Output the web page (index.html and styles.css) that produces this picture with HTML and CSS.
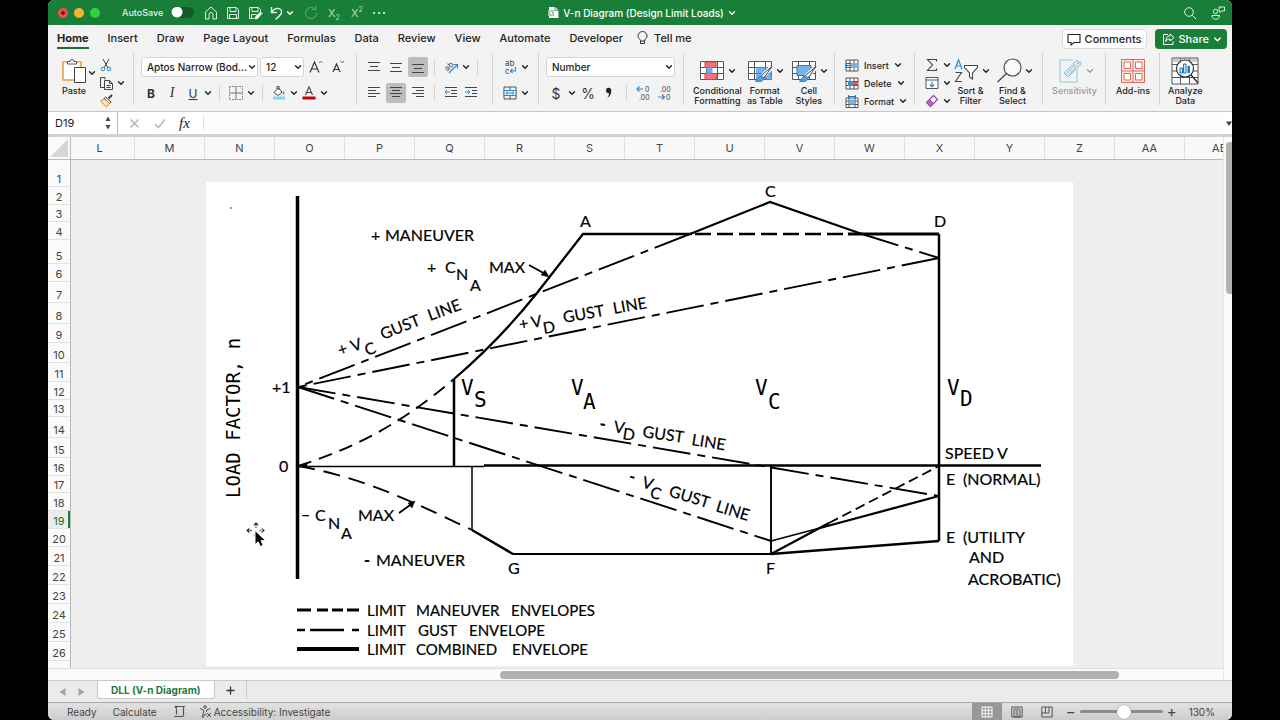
FILE: index.html
```html
<!DOCTYPE html>
<html lang="en">
<head>
<meta charset="utf-8">
<title>V-n Diagram (Design Limit Loads)</title>
<link rel="stylesheet" href="styles.css">
</head>
<body>
<svg class="defs" width="0" height="0" aria-hidden="true">
  <symbol id="chev" viewBox="0 0 8 8"><path d="M1.5 2.7 4 5.2 6.5 2.7" fill="none" stroke="currentColor" stroke-width="1.3" stroke-linecap="round" stroke-linejoin="round"/></symbol>
  <symbol id="table" viewBox="0 0 26 24"><path d="M1.500 2.500h23v18h-23zM1.500 8.500h23M1.500 14.500h23M7.500 2.500v18M18.500 2.500v18" fill="#fff" stroke="#555"/></symbol>
  <symbol id="brush" viewBox="0 0 26 24"><path d="M25 8 15 18" stroke="#f3f3f3" stroke-width="5"/><path d="M25 7.500 14.500 16.500l2.500 2.500z" fill="#fff" stroke="#444"/><path d="M14.500 16.500c-3 0-3 3.500-6 5.500 4 1.500 8.500 0 8.500-3z" fill="#5b9bd5" stroke="#2b7cc0"/></symbol>
</svg>
<div class="window">
  <header class="titlebar">
    <div class="title-left">
      <div class="lights"><i class="light red"></i><i class="light amber"></i><i class="light lime"></i></div>
      <label class="autosave">AutoSave <input type="checkbox" role="switch"></label>
      <div class="quick">
        <button aria-label="Home"><svg width="16" height="16" viewBox="0 0 16 16"><path d="M2.500 7 8 2l5.500 5v7H10V9.500a2 2 0 0 0-4 0V14H2.500z"/></svg></button>
        <button aria-label="Save"><svg width="16" height="16" viewBox="0 0 16 16"><path d="M2.500 2.500h9l2 2v9h-11zM5 2.500v4h6v-4M4.500 13.500v-4h7v4"/></svg></button>
        <button aria-label="Save as"><svg width="16" height="16" viewBox="0 0 16 16"><path d="M7 13.500H2.500v-11h9l2 2V7M5 2.500v4h6v-4M4.500 13v-3.500h5"/><path d="M8 14l.7-2.500L13.500 7l1.500 1.500-4.500 5z" fill="#fff"/></svg></button>
        <span class="split"><button aria-label="Undo"><svg width="16" height="16" viewBox="0 0 16 16"><path d="M2.500 2v5.500H8M2.800 7C6 2 13.500 2.500 12.500 7.500 12 10 9 12 6.500 14.500" stroke-width="1.400"/></svg></button><button class="chev" aria-label="Undo list"><svg width="8" height="8"><use href="#chev"/></svg></button></span>
        <button class="dim" aria-label="Redo"><svg width="16" height="16" viewBox="0 0 16 16"><path d="M13.500 8A5.500 5.500 0 1 1 11 3.400M9 4.500h4V1"/></svg></button>
        <button class="script" aria-label="Subscript"><span>X<sub>2</sub></span></button>
        <button class="script" aria-label="Superscript"><span>X<sup>2</sup></span></button>
        <button aria-label="More"><svg width="16" height="16" viewBox="0 0 16 16"><path d="M3 8h.1M8 8h.1M13 8h.1" stroke-width="2.200" stroke-linecap="round"/></svg></button>
      </div>
    </div>
    <h1 class="doc-title"><svg width="11" height="13" viewBox="0 0 11 13"><path d="M1 1h6l3.500 3.500V12H1z" fill="#fff"/><path d="M7 1v3.500h3.500" fill="none" stroke="#1a7f38" stroke-width=".7"/><path d="M0 4h6v6H0z" fill="#9cc9a9"/><path d="M1.700 5.300 4.300 8.700M4.300 5.300 1.700 8.700" stroke="#fff"/></svg><span>V-n Diagram (Design Limit Loads)</span><svg width="8" height="8"><use href="#chev"/></svg></h1>
    <div class="title-right">
      <button aria-label="Search"><svg width="16" height="16" viewBox="0 0 16 16"><circle cx="7" cy="7" r="4.300"/><path d="m10.200 10.200 4 4"/></svg></button>
      <button aria-label="Collaborate"><svg width="16" height="16" viewBox="0 0 16 16"><circle cx="5.500" cy="6.500" r="2.200"/><path d="M2 10.500h7.500c0 5-7.500 5-7.500 0zM9 2h5.500v4h-3l-1.500 1.500V6H9z"/></svg></button>
    </div>
  </header>

  <nav class="tabs">
    <a class="tab active" href="#home">Home</a><a class="tab" href="#insert">Insert</a><a class="tab" href="#draw">Draw</a><a class="tab" href="#layout">Page Layout</a><a class="tab" href="#formulas">Formulas</a><a class="tab" href="#data">Data</a><a class="tab" href="#review">Review</a><a class="tab" href="#view">View</a><a class="tab" href="#automate">Automate</a><a class="tab" href="#developer">Developer</a>
    <a class="tab tell" href="#tell"><svg width="11" height="14" viewBox="0 0 11 14"><path d="M3.500 10C3.500 8 1 7.500 1 5a4.500 4.500 0 0 1 9 0c0 2.500-2.500 3-2.500 5zM3.500 10v2.500h4V10" fill="none" stroke="#333"/></svg>Tell me</a>
    <div class="tab-actions">
      <button class="comments"><svg width="14" height="13" viewBox="0 0 14 13"><path d="M1 1.500h12v8H7L4 12V9.500H1z" fill="none" stroke="#222" stroke-width="1.100"/></svg>Comments</button>
      <button class="share"><svg width="13" height="13" viewBox="0 0 13 13"><path d="M6 1.500H1.500v10h9.500V8.500M8 1l4 3.500-4 3.500V6C5.500 6 4.500 7 3.800 8.500 3.800 5 5 3 8 3z" fill="none" stroke="#fff"/></svg>Share<svg width="9" height="9"><use href="#chev"/></svg></button>
    </div>
  </nav>

  <div class="ribbon">
    <section class="group clip">
      <button class="big"><span class="pic"><svg width="26" height="27" viewBox="0 0 26 27"><path d="M2 4h18v18H2z" fill="#fff" stroke="#e5a347" stroke-width="1.600"/><path d="M6.500 6V3.500H9a2 2 0 0 1 4 0h2.500V6z" fill="#fff" stroke="#555"/><path d="M13.500 9.500h11v15h-11z" fill="#fff" stroke="#444"/></svg></span><span>Paste</span></button>
      <button class="chev after-big" aria-label="Paste options"><svg width="8" height="8"><use href="#chev"/></svg></button>
      <div class="stack">
        <button class="ib" aria-label="Cut"><svg width="14" height="14" viewBox="0 0 14 14"><path d="M4 1l5 9M10 1 5 10" fill="none" stroke="#444"/><circle cx="4" cy="11" r="1.800" fill="none" stroke="#2b8bcf"/><circle cx="10" cy="11" r="1.800" fill="none" stroke="#2b8bcf"/></svg></button>
        <span class="split"><button class="ib" aria-label="Copy"><svg width="15" height="15" viewBox="0 0 15 15"><path d="M6 3.500V1.500H1.500v10H5M5.500 4.500h5l3 3v6h-8zM10.500 4.500v3h3M7.500 9.500h4M7.500 11.500h4" fill="none" stroke="#444"/></svg></button><button class="chev" aria-label="Copy options"><svg width="8" height="8"><use href="#chev"/></svg></button></span>
        <button class="ib" aria-label="Format painter"><svg width="15" height="14" viewBox="0 0 15 14"><path d="M13 1 9.500 4.500" stroke="#444" stroke-width="2.200"/><path d="m6.500 3 5.500 5-1.500 1.500-5.500-5z" fill="#fff" stroke="#444"/><path d="M5 5 1.500 7l6 6 3-4z" fill="#fbe3bd" stroke="#dc8b25"/></svg></button>
      </div>
    </section>

    <section class="group rows">
      <div class="row fonts">
        <span class="select name"><select aria-label="Font"><option>Aptos Narrow (Bod...</option></select><svg width="8" height="8"><use href="#chev"/></svg></span>
        <span class="select size"><select aria-label="Font size"><option>12</option></select><svg width="8" height="8"><use href="#chev"/></svg></span>
        <button class="ib" aria-label="Grow font"><svg width="16" height="16" viewBox="0 0 16 16"><path d="M2 13.500 6.500 3 11 13.500M3.500 10h6" fill="none" stroke="#333" stroke-width="1.200"/><path d="m11 4 1.700-2 1.700 2" fill="none" stroke="#2b8bcf"/></svg></button>
        <button class="ib" aria-label="Shrink font"><svg width="16" height="16" viewBox="0 0 16 16"><path d="M3 13 6.500 5l3.500 8M4.300 10.500h4.500" fill="none" stroke="#333" stroke-width="1.200"/><path d="m10.500 2 1.700 2 1.700-2" fill="none" stroke="#2b8bcf"/></svg></button>
      </div>
      <div class="row">
        <button class="ib glyph"><b>B</b></button><button class="ib glyph serif"><i>I</i></button><button class="ib glyph"><u>U</u></button><button class="chev" aria-label="Underline options"><svg width="8" height="8"><use href="#chev"/></svg></button>
        <i class="bar"></i>
        <button class="ib" aria-label="Borders"><svg width="14" height="14" viewBox="0 0 14 14"><path d="M.5.5h13v13H.500z" fill="none" stroke="#777" stroke-dasharray="1.500 1"/><path d="M7 1v12M1 7h12" stroke="#777"/></svg></button><button class="chev" aria-label="Border options"><svg width="8" height="8"><use href="#chev"/></svg></button>
        <i class="bar"></i>
        <button class="ib" aria-label="Fill colour"><svg width="14" height="14" viewBox="0 0 14 14"><path d="M2 6.500 6.500 2 10 6 6 9.500zM5 3V.5h2V4" fill="#fff" stroke="#444"/><path d="M11.500 5.500v3" stroke="#2b8bcf" stroke-width="1.500"/><path d="M1 10.500h12v3H1z" fill="#84d6ee"/></svg></button><button class="chev" aria-label="Fill options"><svg width="8" height="8"><use href="#chev"/></svg></button>
        <button class="ib" aria-label="Font colour"><svg width="14" height="14" viewBox="0 0 14 14"><path d="M3.500 9 7 .8 10.500 9M4.700 6.500h4.600" fill="none" stroke="#444" stroke-width="1.100"/><path d="M.5 10.500h13v3H.500z" fill="#c4000c"/></svg></button><button class="chev" aria-label="Font colour options"><svg width="8" height="8"><use href="#chev"/></svg></button>
      </div>
    </section>

    <section class="group rows align">
      <div class="row">
        <button class="ab" aria-label="Top align"><svg width="14" height="14" viewBox="0 0 14 14"><path d="M1 2.500h12M3 6.500h8M1 10.500h12" stroke="#444"/></svg></button><button class="ab" aria-label="Middle align"><svg width="14" height="14" viewBox="0 0 14 14"><path d="M1 3.500h12M3 7.500h8M1 11.500h12" stroke="#444"/></svg></button><button class="ab on" aria-label="Bottom align"><svg width="14" height="14" viewBox="0 0 14 14"><path d="M1 4.500h12M3 8.500h8M1 12.500h12" stroke="#444"/></svg></button>
        <i class="bar"></i>
        <button class="ib" aria-label="Orientation"><svg width="16" height="16" viewBox="0 0 16 16"><text x="2" y="11" font-size="8" transform="rotate(-40 5 9)">ab</text><path d="M6 14l8-8M10.500 5.500H14.500V9.500" fill="none" stroke="#2b8bcf" stroke-width="1.100"/></svg></button><button class="chev" aria-label="Orientation options"><svg width="8" height="8"><use href="#chev"/></svg></button>
        <i class="bar"></i>
      </div>
      <div class="row">
        <button class="ab" aria-label="Align left"><svg width="14" height="14" viewBox="0 0 14 14"><path d="M1 1.500h12M1 4.500h8M1 7.500h12M1 10.500h8" stroke="#444"/></svg></button><button class="ab on" aria-label="Centre"><svg width="14" height="14" viewBox="0 0 14 14"><path d="M1 1.500h12M3 4.500h8M1 7.500h12M3 10.500h8" stroke="#444"/></svg></button><button class="ab" aria-label="Align right"><svg width="14" height="14" viewBox="0 0 14 14"><path d="M1 1.500h12M5 4.500h8M1 7.500h12M5 10.500h8" stroke="#444"/></svg></button>
        <i class="bar"></i>
        <button class="ib" aria-label="Decrease indent"><svg width="14" height="14" viewBox="0 0 14 14"><path d="M1 1.500h12M7 4.500h6M7 7.500h6M1 10.500h12" stroke="#444"/><path d="M6 6H1M3 4 1 6l2 2" fill="none" stroke="#2b8bcf"/></svg></button><button class="ib" aria-label="Increase indent"><svg width="14" height="14" viewBox="0 0 14 14"><path d="M1 1.500h12M8 4.500h5M8 7.500h5M1 10.500h12" stroke="#444"/><path d="M1 6h5M4 4l2 2-2 2" fill="none" stroke="#2b8bcf"/></svg></button>
      </div>
    </section>

    <section class="group rows">
      <div class="row">
        <button class="ib" aria-label="Wrap text"><svg width="14" height="18" viewBox="0 0 14 18"><text x="2" y="8" font-size="8">ab</text><text x="2" y="16" font-size="8">c</text><path d="M12.500 9v4H7.500M9.500 11l-2 2 2 2" fill="none" stroke="#2b8bcf" stroke-width="1.200"/></svg></button><button class="chev" aria-label="Wrap options"><svg width="8" height="8"><use href="#chev"/></svg></button>
      </div>
      <div class="row">
        <button class="ib" aria-label="Merge"><svg width="14" height="14" viewBox="0 0 14 14"><path d="M1 1h12v12H1zM7 1v3M7 10v3" fill="none" stroke="#555"/><path d="M1 4.500h12v5H1z" fill="#e3f1fb" stroke="#2b8bcf"/><path d="M3 7h8M4.500 5.500 3 7l1.500 1.500M9.500 5.500 11 7 9.500 8.500" fill="none" stroke="#2b8bcf"/></svg></button><button class="chev" aria-label="Merge options"><svg width="8" height="8"><use href="#chev"/></svg></button>
      </div>
    </section>

    <section class="group rows number">
      <div class="row"><span class="select format"><select aria-label="Number format"><option>Number</option></select><svg width="8" height="8"><use href="#chev"/></svg></span></div>
      <div class="row">
        <button class="ib glyph money">$</button><button class="chev" aria-label="Currency options"><svg width="8" height="8"><use href="#chev"/></svg></button><button class="ib glyph money">%</button><button class="ib" aria-label="Comma style"><svg width="10" height="12" viewBox="0 0 10 12"><path d="M2 3.500a2.600 2.600 0 0 1 5.300 0C7.300 7 6 9.500 3 11 4.500 9.500 5 8 5 6.200 3.300 6.500 2 5.300 2 3.500z" fill="#222"/></svg></button>
        <i class="bar"></i>
        <button class="ib" aria-label="Increase decimal"><svg width="16" height="18" viewBox="0 0 16 18"><path d="M1 5h6M3.500 2.500 1 5l2.500 2.500" fill="none" stroke="#2b8bcf" stroke-width="1.200"/><text x="9" y="8" font-size="7">0</text><text x="3" y="16" font-size="7">.00</text></svg></button><button class="ib" aria-label="Decrease decimal"><svg width="16" height="18" viewBox="0 0 16 18"><text x="3" y="8" font-size="7">.00</text><text x="9" y="16" font-size="7">0</text><path d="M1 13h6M5 10.500 7.500 13 5 15.500" fill="none" stroke="#2b8bcf" stroke-width="1.200"/></svg></button>
      </div>
    </section>

    <section class="group styles">
      <button class="big"><span class="pic"><svg width="26" height="24" viewBox="0 0 26 24"><use href="#table"/><path d="M6 3h11v5.500H6zM6 14.500h12v6H6z" fill="#f5707e" stroke="#d13c4c"/><path d="M7.500 8.500h6v6h-6z" fill="#69aee8"/></svg><svg class="more" width="8" height="8"><use href="#chev"/></svg></span><span>Conditional<br>Formatting</span></button>
      <button class="big"><span class="pic"><svg width="26" height="24" viewBox="0 0 26 24"><use href="#table"/><path d="M9 8.500h15.500v12H9z" fill="#74b3ea"/><path d="M7.500 14.500h17M18.500 8.500v12" stroke="#2b7cc0"/><use href="#brush"/></svg><svg class="more" width="8" height="8"><use href="#chev"/></svg></span><span>Format<br>as Table</span></button>
      <button class="big"><span class="pic"><svg width="26" height="24" viewBox="0 0 26 24"><use href="#table"/><path d="M6 6.500h14v10H6z" fill="#74b3ea" stroke="#2b7cc0"/><use href="#brush"/></svg><svg class="more" width="8" height="8"><use href="#chev"/></svg></span><span>Cell<br>Styles</span></button>
    </section>

    <section class="group cells">
      <button class="line"><svg width="14" height="13" viewBox="0 0 14 13"><path d="M1 1h12v11H1zM1 4.500h12M1 8.500h12M5 1v11M9 1v11" fill="#fff" stroke="#555"/><path d="M6 4h7v5H6z" fill="#74b3ea"/><path d="M6 6.500H.500M3 4 .500 6.500 3 9" fill="none" stroke="#1976c4"/></svg>Insert<svg width="8" height="8"><use href="#chev"/></svg></button>
      <button class="line"><svg width="14" height="13" viewBox="0 0 14 13"><path d="M1 1h12v11H1zM1 4.500h12M1 8.500h12M5 1v11M9 1v11" fill="#fff" stroke="#555"/><path d="M3 4h5v5H3z" fill="#3b8fd9"/><path d="m8.500 4.500 4 4M12.500 4.500l-4 4" stroke="#d6303c" stroke-width="1.300"/></svg>Delete<svg width="8" height="8"><use href="#chev"/></svg></button>
      <button class="line"><svg width="14" height="13" viewBox="0 0 14 13"><path d="M1 3h12v9.500H1zM1 6h12M1 9.500h12M4 1v11M10 1v11" fill="#fff" stroke="#555"/><path d="M4 4.500h6v5H4z" fill="#74b3ea"/><path d="M3.500 1.500h7M3.500 0v3M10.500 0v3" stroke="#1976c4"/></svg>Format<svg width="8" height="8"><use href="#chev"/></svg></button>
    </section>

    <section class="group editing">
      <div class="stack">
        <span class="split"><button class="ib" aria-label="AutoSum"><svg width="14" height="14" viewBox="0 0 14 14"><path d="M11.500 3.500v-2h-9L7.500 7l-5 5.500h9v-2" fill="none" stroke="#444" stroke-width="1.100"/></svg></button><button class="chev" aria-label="Sum options"><svg width="8" height="8"><use href="#chev"/></svg></button></span>
        <span class="split"><button class="ib" aria-label="Fill"><svg width="14" height="14" viewBox="0 0 14 14"><path d="M1 1.500h12v11H1zM1 4h12" fill="#fff" stroke="#555"/><path d="M7 5.500v5M4.800 8.500 7 10.700 9.200 8.500" fill="none" stroke="#2b8bcf" stroke-width="1.100"/></svg></button><button class="chev" aria-label="Fill options"><svg width="8" height="8"><use href="#chev"/></svg></button></span>
        <span class="split"><button class="ib" aria-label="Clear"><svg width="14" height="14" viewBox="0 0 14 14"><path d="M1.500 8.500 8.500 1.500l4 4-7 7z" fill="#fff" stroke="#8d3a9e" stroke-width="1.100"/><path d="m1.500 8.500 3-3 4 4-3 3z" fill="#b269c2" stroke="#8d3a9e"/></svg></button><button class="chev" aria-label="Clear options"><svg width="8" height="8"><use href="#chev"/></svg></button></span>
      </div>
      <button class="big"><span class="pic"><svg width="26" height="26" viewBox="0 0 26 26"><path d="M2 11 5.500 2 9 11M3.200 8h4.600" fill="none" stroke="#2b8bcf" stroke-width="1.200"/><path d="M2.500 14.500h6l-6 9h6.500" fill="none" stroke="#444" stroke-width="1.100"/><path d="M11.500 7.500h13v2l-5 5.500v6l-3-2V15l-5-5.500z" fill="#fff" stroke="#444" stroke-width="1.100"/></svg><svg class="more" width="8" height="8"><use href="#chev"/></svg></span><span>Sort &amp;<br>Filter</span></button>
      <button class="big find"><span class="pic"><svg width="26" height="26" viewBox="0 0 26 26"><circle cx="16.500" cy="9.500" r="8.500" fill="#fafafa" stroke="#444" stroke-width="1.100"/><path d="M10.500 15.500 1.500 24" stroke="#444" stroke-width="1.200"/></svg><svg class="more" width="8" height="8"><use href="#chev"/></svg></span><span>Find &amp;<br>Select</span></button>
    </section>

    <section class="group solo">
      <button class="big muted" disabled><span class="pic"><svg width="26" height="26" viewBox="0 0 26 26"><path d="M16 2H3v22h17V11" fill="#eef4f7" stroke="#9cc4d8"/><path d="m7 15 8-8 4 4-8 8zM9.500 15.500l6-6M11.500 17l6-6M16 6l4-4 1.500 1.500-1 2.500 3-2 1 2-4 4z" fill="#dcecf4" stroke="#8dbcd4"/></svg><svg class="more" width="8" height="8"><use href="#chev"/></svg></span><span>Sensitivity</span></button>
    </section>
    <section class="group solo">
      <button class="big"><span class="pic"><svg width="26" height="26" viewBox="0 0 26 26"><path d="M1.500 1.500h23v23h-23zM13 1.500v23M1.500 13h23" fill="#fbe9e5" stroke="#dd6a55"/><path d="M4 4h6.500v6.500H4zM15.500 4H22v6.500h-6.500zM4 15.500h6.500V22H4zM15.500 15.500H22V22h-6.500z" fill="#fff" stroke="#dd6a55"/></svg></span><span>Add-ins</span></button>
    </section>
    <section class="group last">
      <button class="big"><span class="pic"><svg width="28" height="28" viewBox="0 0 28 28"><path d="M1 1h26v26H1zM1 7.500h26M1 14h26M1 20.500h26M9.500 1v26M18.500 1v26" fill="#fff" stroke="#555"/><path d="M1 1h26v4H1z" fill="#999" opacity=".5"/><circle cx="14" cy="11.500" r="8.500" fill="#fff" stroke="#333" stroke-width="1.200"/><path d="m20 18 7 8" stroke="#333" stroke-width="1.500"/><path d="M9 11h2.500v5H9zM12.500 7H15v9h-2.500z" fill="#cfe6f8" stroke="#1976c4"/><path d="M16.500 9H19v7h-2.500z" fill="#1976c4"/></svg></span><span>Analyze<br>Data</span></button>
    </section>
  </div>

  <div class="formula">
    <input class="namebox" aria-label="Name box" value="D19">
    <span class="stepper"><svg width="8" height="16" viewBox="0 0 8 16"><path d="M4 1.500 6.500 6h-5zM4 14.500 6.500 10h-5z" fill="#444"/></svg></span>
    <button aria-label="Cancel"><svg width="11" height="11" viewBox="0 0 11 11"><path d="m1.500 1.500 8 8M9.500 1.500l-8 8" stroke="#b5b5b5" stroke-width="1.500"/></svg></button>
    <button aria-label="Enter"><svg width="12" height="11" viewBox="0 0 12 11"><path d="m1 6 3.500 3.500L11 1.500" fill="none" stroke="#b5b5b5" stroke-width="1.500"/></svg></button>
    <button class="fx">fx</button>
    <input class="entry" aria-label="Formula">
    <svg class="expand" width="7" height="7" viewBox="0 0 7 7"><path d="M1 1.500h6L4 6z" fill="#444"/></svg>
  </div>

  <main class="grid">
    <div class="corner"><svg width="18" height="18" viewBox="0 0 18 18"><path d="M18 0v18H0z" fill="#d6d6d6"/></svg></div>
    <div class="cols"><span class="first">L</span><span>M</span><span>N</span><span>O</span><span>P</span><span>Q</span><span>R</span><span>S</span><span>T</span><span>U</span><span>V</span><span>W</span><span>X</span><span>Y</span><span>Z</span><span>AA</span><span>AB</span></div>
    <div class="vscroll"><i></i></div>
    <div class="rownums">
      <span style="height:27px">1</span><span style="height:18px">2</span><span style="height:17px">3</span><span style="height:18px">4</span><span style="height:24px">5</span><span style="height:18px">6</span><span style="height:21px">7</span><span style="height:21px">8</span><span style="height:19px">9</span><span style="height:20px">10</span><span style="height:19px">11</span><span style="height:18px">12</span><span style="height:17px">13</span><span style="height:21px">14</span><span style="height:20px">15</span><span style="height:18px">16</span><span style="height:17px">17</span><span style="height:18px">18</span><span class="current" style="height:18px">19</span><span style="height:18px">20</span><span style="height:19px">21</span><span style="height:19px">22</span><span style="height:19px">23</span><span style="height:19px">24</span><span style="height:19px">25</span><span style="height:19px">26</span><span style="height:19px">27</span>
    </div>
    <div class="sheet">
      <svg class="diagram" width="867" height="484" viewBox="206 182 867 484" role="img" aria-label="V-n diagram">
        <g class="ink">
          <path d="M297.500 196V579" stroke-width="3.500"/>
          <path d="M230.500 208h1" stroke-width="1.500" stroke="#777"/>
          <path d="M298 466.500H484" stroke-width="1.600"/>
          <path d="M484 465.500H1041" stroke-width="2.400"/>
          <path d="M454 379V466M939 234V541" stroke-width="2.500"/>
          <path d="M472 466V530" stroke-width="1.500"/>
          <path d="M771 466V554" stroke-width="1.900"/>
          <path d="M454 379C482 355 510 327 537 293L583 234H692" stroke-width="2.300"/>
          <path d="M848 234H939" stroke-width="2.800"/>
          <path d="M695 234H848" stroke-width="2.300" stroke-dasharray="16 6"/>
          <path d="M690 234 770 202 862 234" stroke-width="2.200"/>
          <path class="dd" d="M690 234 298 387"/>
          <path class="dd" d="M862 234 939 258"/>
          <path class="dd" d="M939 258 298 387"/>
          <path class="dd" d="M298 387 939 496"/>
          <path class="dd" d="M298 387 771 541"/>
          <path d="M771 541 820 528" stroke-width="1.800"/>
          <path d="M820 528 939 496M771 554 939 541" stroke-width="2.300"/>
          <path d="M771 554 829 523" stroke-width="2.300"/>
          <path d="M829 523 939 466" stroke-width="1.800" stroke-dasharray="10 5"/>
          <path d="M298 466C352 449 400 425 454 379" stroke-width="1.900" stroke-dasharray="14 8"/>
          <path d="M298 466C360 477 405 498 472 530" stroke-width="1.900" stroke-dasharray="17 9"/>
          <path d="M472 530 513 554" stroke-width="2.400"/>
          <path d="M512 554H771" stroke-width="2"/>
          <path d="M529 265 547 275M399 513 413 503" stroke-width="1.900"/>
          <path d="m549 277-8-2 4-5zM415 501l-7 2 4 5zM299 466l8-3v5z" fill="#000" stroke-width=".5"/>
          <path d="M297 610H311M317 610H328M332 610H343M347 610H359" stroke-width="3.200"/>
          <path d="M297 630H305M310 630H344M352 630H359" stroke-width="2.600"/>
          <path d="M297 649H359" stroke-width="4"/>
        </g>
        <g class="lettering">
          <text x="371" y="241">+</text><text x="385" y="241">MANEUVER</text>
          <text x="427" y="273">+</text><text x="445" y="273">C</text><text x="456" y="280">N</text><text x="470" y="291">A</text><text x="489" y="273">MAX</text>
          <text transform="translate(340 356) rotate(-20)">+</text><text transform="translate(353 352) rotate(-20)">V</text><text transform="translate(367 356) rotate(-20)">C</text><text transform="translate(383 340) rotate(-22)">GUST</text><text transform="translate(430 321) rotate(-20)">LINE</text>
          <text transform="translate(520 330) rotate(-10)">+</text><text transform="translate(532 328) rotate(-10)">V</text><text transform="translate(544 334) rotate(-10)">D</text><text transform="translate(564 323) rotate(-10)">GUST</text><text transform="translate(614 314) rotate(-10)">LINE</text>
          <text class="heavy" transform="translate(599 429) rotate(9)">-</text><text transform="translate(613 432) rotate(9)">V</text><text transform="translate(622 439) rotate(9)">D</text><text transform="translate(642 437) rotate(8)">GUST</text><text transform="translate(691 445) rotate(9)">LINE</text>
          <text class="heavy" transform="translate(628 481) rotate(17)">-</text><text transform="translate(641 487) rotate(17)">V</text><text transform="translate(649 497) rotate(17)">C</text><text transform="translate(668 496) rotate(17)">GUST</text><text transform="translate(715 511) rotate(17)">LINE</text>
          <text x="580" y="227">A</text><text x="765" y="197">C</text><text x="934" y="227">D</text><text x="508" y="574">G</text><text x="766" y="574">F</text>
          <text x="272" y="393">+1</text><text x="279" y="472">0</text>
          <text x="301" y="520">–</text><text x="315" y="521">C</text><text x="328" y="529">N</text><text x="341" y="539">A</text><text x="358" y="521">MAX</text>
          <text x="364" y="566" class="heavy">-</text><text x="376" y="566">MANEUVER</text>
          <text x="945" y="459">SPEED</text><text x="997" y="459">V</text>
          <text x="946" y="485">E</text><text x="963" y="485">(NORMAL)</text>
          <text x="946" y="543">E</text><text x="963" y="543">(UTILITY</text><text x="969" y="563">AND</text><text x="968" y="585">ACROBATIC)</text>
          <g class="legend">
          <text x="367" y="616">LIMIT</text><text x="416" y="616">MANEUVER</text><text x="511" y="616">ENVELOPES</text>
          <text x="367" y="636">LIMIT</text><text x="418" y="636">GUST</text><text x="469" y="636">ENVELOPE</text>
          <text x="367" y="655">LIMIT</text><text x="416" y="655">COMBINED</text><text x="512" y="655">ENVELOPE</text>
          </g>
        </g>
        <g class="plain">
          <text x="461" y="395">V</text><text x="474" y="407">S</text><text x="571" y="395">V</text><text x="583" y="409">A</text><text x="755" y="395">V</text><text x="768" y="409">C</text><text x="947" y="395">V</text><text x="960" y="406">D</text>
          <text class="axis" transform="translate(240 498) rotate(-90)">LOAD FACTOR, n</text>
        </g>
      </svg>
      <svg class="pointer" width="24" height="28" viewBox="0 0 24 28"><path d="m11 1 3 3.500H8zM1 9.500l3.500-3v6zM20 9.500l-3.500-3v6zM10.300 4h1.400v3h-1.400zM4 8.800h3v1.400H4zM14.500 8.800h3v1.400h-3zM10 16l-2-2h2z" fill="#000" stroke="#fff" stroke-width=".5"/><path d="M10 9.500v14l3.200-2.700 2.200 4.700 2.800-1.200-2.200-4.600h4.700z" fill="#000" stroke="#fff"/></svg>
    </div>
    <div class="hscroll"><i></i></div>
  </main>

  <footer class="sheets">
    <button class="nav" aria-label="Previous sheet"><svg width="7" height="8" viewBox="0 0 7 8"><path d="M6.500 0v8L.500 4z" fill="#a3a3a3"/></svg></button>
    <button class="nav" aria-label="Next sheet"><svg width="7" height="8" viewBox="0 0 7 8"><path d="M.5 0v8l6-4z" fill="#a3a3a3"/></svg></button>
    <button class="sheet-tab">DLL (V-n Diagram)</button>
    <button class="add" aria-label="Add sheet"><svg width="9" height="9" viewBox="0 0 9 9"><path d="M4.500.5v8M.5 4.500h8" stroke="#333" stroke-width="1.300"/></svg></button>
  </footer>
  <div class="status">
    <span class="ready">Ready</span><span class="calc">Calculate</span>
    <svg width="13" height="13" viewBox="0 0 13 13"><path d="M3.500 1.500h8.500M3.500 3.500v6M1 11.500h8c2 0 1.500-2 1.500-4v-6" fill="none" stroke="#555" stroke-width="1.200"/><circle cx="3" cy="2" r="1.300" fill="#555"/></svg>
    <button class="access"><svg width="13" height="13" viewBox="0 0 13 13"><circle cx="6" cy="2" r="1.300"/><path d="M1 3.500 4.500 5v3L3 12l1.300.5L6 9l1.500 1M11.500 3.500 7.500 5v2M8 8l4 4M12 8l-4 4"/></svg>Accessibility: Investigate</button>
    <div class="views">
      <button class="view on" aria-label="Normal view"><svg width="12" height="12" viewBox="0 0 12 12"><path d="M1 1h10v10H1zM1 4.300h10M1 7.600h10M4.300 1v10M7.600 1v10" fill="none" stroke="#fff"/></svg></button><button class="view" aria-label="Page layout view"><svg width="12" height="12" viewBox="0 0 12 12"><path d="M.8 1h10.400v10H.800zM3 3h6v8H3zM4.500 5h3M4.500 7h3M4.500 9h3" fill="none" stroke="#555"/></svg></button><button class="view" aria-label="Page break view"><svg width="12" height="12" viewBox="0 0 12 12"><path d="M.8 1h10.400v10H.800zM4.500 1v6H8V1M.8 7H4.500" fill="none" stroke="#555"/></svg></button>
    </div>
    <label class="zoom"><span>−</span><input type="range" min="0" max="100" value="54" aria-label="Zoom"><span>+</span></label>
    <output>130%</output>
  </div>
</div>
</body>
</html>
```
FILE: styles.css
```css
* { box-sizing: border-box; }
html, body { height: 100%; }
body {
  margin: 0;
  background: #000;
  color: #1d1d1d;
  font-family: Inter, "Liberation Sans", sans-serif;
  font-size: 11px;
}
button, input, select { font: inherit; color: inherit; }
button { border: 0; padding: 0; background: none; display: flex; align-items: center; justify-content: center; }
svg { display: block; flex: none; }
.defs { position: absolute; }

.window {
  margin: 0 48px;
  min-height: 100vh;
  display: flex;
  flex-direction: column;
  background: #f3f3f3;
  border-radius: 6px;
  overflow: hidden;
}

.titlebar {
  height: 25px;
  flex: none;
  display: grid;
  grid-template-columns: 1fr auto 1fr;
  align-items: center;
  background: #197f38;
  color: #fff;
}
.title-left { display: flex; align-items: center; padding-left: 10px; }
.lights { display: flex; gap: 6px; }
.light { width: 10px; height: 10px; border-radius: 50%; }
.red { background: radial-gradient(#7b1420 2px, #ee4d56 2px); }
.amber { background: #f6b42d; }
.lime { background: #2fd33f; }
.autosave { display: flex; align-items: center; gap: 8px; margin-left: 22px; font-size: 9px; font-weight: 500; white-space: nowrap; color: #e4f1e7; }
.autosave input {
  appearance: none;
  margin: 0;
  width: 23px;
  height: 11px;
  border-radius: 6px;
  background: radial-gradient(circle at 6px 5px, #fff 5px, #16572c 6px);
}
.quick { display: flex; align-items: center; gap: 6px; margin-left: 9px; }
.quick svg, .title-right svg { fill: none; stroke: #dff0e4; }
.quick .dim { opacity: .4; }
.quick .split { margin-right: 2px; }
.quick .script { width: 17px; height: 20px; font-size: 11px; line-height: 12px; color: #b9dcc3; white-space: nowrap; }
.script sub, .script sup { font-size: 7px; line-height: 0; }
.split { display: flex; align-items: center; }
.doc-title { display: flex; align-items: center; gap: 4px; margin: 0; padding-left: 4px; font-size: 10px; font-weight: 500; white-space: nowrap; }
.title-right { display: flex; justify-content: flex-end; gap: 12px; padding-right: 6px; }

.tabs { height: 27px; flex: none; display: flex; align-items: flex-start; gap: 19px; padding: 4px 5px 0 9px; }
.tab { color: #222; text-decoration: none; font-weight: 500; line-height: 18px; border-bottom: 2px solid transparent; white-space: nowrap; }
.tab.active { font-weight: 700; border-bottom-color: #1b6b38; }
.tell { display: flex; align-items: center; gap: 6px; margin-left: -5px; }
.tab-actions { margin-left: auto; display: flex; gap: 8px; }
.comments, .share { height: 20px; border-radius: 4px; gap: 4px; font-weight: 500; }
.comments { background: #fff; border: 1px solid #d9d9d9; padding: 0 4px; }
.share { background: #197f38; color: #fff; padding: 0 5px 0 7px; }

.ribbon {
  height: 60px;
  flex: none;
  display: grid;
  grid-template-columns: 86fr 223fr 136fr 46fr 145fr 151fr 80fr 128fr 63fr 54fr 72fr;
  border-bottom: 1px solid #c6c6c6;
}
.group { position: relative; min-width: 0; display: flex; padding-top: 4px; }
.group:not(:last-child)::after { content: ""; position: absolute; right: 0; top: 1px; bottom: 6px; width: 1px; background: #d2d2d2; }
.rows { flex-direction: column; gap: 6px; padding-left: 7px; padding-top: 5px; }
.row { display: flex; align-items: center; height: 20px; }
.ib { width: 20px; height: 18px; flex: none; }
.ab { width: 20px; height: 20px; margin-right: 2px; border-radius: 2px; flex: none; }
.align .ab + .bar { margin-left: 4px; }
.on { background: #bdbdbd; }
.chev { width: 10px; height: 16px; flex: none; }
.bar { width: 1px; height: 16px; margin: 0 6px; background: #d2d2d2; flex: none; }
.glyph { font-size: 12px; color: #333; }
.glyph + .glyph { margin-left: 1px; }
.serif { font-family: "Liberation Serif", serif; font-size: 14px; }
.money { font-size: 14px; }
.ribbon svg text { font-family: Inter, sans-serif; fill: #444; }
.select { position: relative; display: block; }
.select select { appearance: none; width: 100%; height: 20px; padding: 0 0 0 5px; border: 1px solid #d4d4d4; border-radius: 3px; background: #fff; font-size: 10px; font-weight: 500; }
.select svg { position: absolute; right: 2px; top: 6px; pointer-events: none; }
.fonts { gap: 2px; }
.name { width: 117px; }
.size { width: 44px; }
.number .row:first-child { padding-right: 9px; }
.number .row:last-child { gap: 1px; }
.number .bar { margin: 0 6px; }
.format { width: 100%; }
.big { flex-direction: column; justify-content: flex-start; font-size: 9px; font-weight: 500; line-height: 10px; text-align: center; white-space: nowrap; align-items: center; align-self: flex-start; }
.pic { position: relative; height: 30px; display: flex; align-items: center; }
.more { position: absolute; left: 100%; margin-left: 3px; }
.muted { color: #9a9a9a; }
.clip .big { margin-left: 13px; }
.after-big { margin-top: 9px; }
.stack { display: flex; flex-direction: column; }
.clip .stack { margin-left: -1px; }
.styles { padding-left: 9px; gap: 5px; }
.styles .pic, .editing .pic { margin-right: 10px; }
.styles .big:nth-child(3) { margin-left: 3px; }
.find .pic { margin-right: 8px; }
.cells { flex-direction: column; padding-left: 10px; }
.line { height: 18px; gap: 5px; font-size: 9px; font-weight: 500; justify-content: flex-start; }
.editing { padding-left: 7px; gap: 10px; }
.editing .stack { margin-right: -9px; }
.editing .big { width: 35px; }
.editing .find { margin-left: -3px; }
.solo { justify-content: center; }
.muted .pic { margin-right: 8px; }
.last { padding-left: 8px; }

.formula { height: 25px; flex: none; display: flex; align-items: center; background: #fff; border-bottom: 3px solid #d2d2d2; }
.formula button { width: 25px; }
.namebox { width: 56px; border: 0; padding: 0 0 0 7px; font-size: 11px; background: none; }
.stepper { width: 14px; height: 22px; display: flex; align-items: center; border-right: 1px solid #bbb; margin-right: 4px; }
.formula .fx { font: italic 15px "Liberation Serif", serif; }
.entry { flex: 1; height: 14px; border: 0; border-left: 1px solid #e0e0e0; margin-left: 6px; background: #fdfdfd; }

.grid {
  flex: 1 0 auto;
  display: grid;
  grid-template-columns: 23px minmax(0, 1fr) 9px;
  grid-template-rows: 23px minmax(508px, 1fr) 12px;
}
.corner { display: flex; align-items: center; justify-content: flex-end; padding-right: 2px; background: #fafafa; border-right: 1px solid #bbb; border-bottom: 1px solid #bbb; }
.cols { display: flex; overflow: hidden; background: #f9f9f9; border-bottom: 1px solid #b9b9b9; }
.cols span { flex: none; width: 70px; line-height: 22px; text-align: center; border-right: 1px solid #dedede; color: #444; }
.cols .first { width: 64px; padding-right: 6px; }
.vscroll { grid-column: 3; grid-row: 1 / 4; display: flex; justify-content: flex-end; background: #fafafa; padding: 5px 0; border-left: 1px solid #e6e6e6; }
.vscroll i { width: 6px; height: 152px; border-radius: 4px 0 0 4px; background: #b1b1b1; }
.rownums { grid-column: 1; grid-row: 2; height: 508px; overflow: hidden; background: #fafafa; border-right: 1px solid #b9b9b9; }
.rownums span { display: flex; align-items: flex-end; justify-content: center; line-height: 14px; border-bottom: 1px solid #e2e2e2; color: #444; }
.rownums .current { background: #ececec; color: #1b6b38; box-shadow: inset -2px 0 #1b7a3c; }
.sheet { position: relative; grid-column: 2; grid-row: 2; overflow: hidden; background: #eee; padding: 22px 0 0 135px; }
.diagram { background: #fff; }
.pointer { position: absolute; left: 174px; top: 361px; }
.ink path { fill: none; stroke: #000; }
.ink path[fill] { fill: #000; }
.ink .dd { stroke-width: 1.9; stroke-dasharray: 38 7 8 7; }
.lettering { font-family: Lato, sans-serif; font-size: 16px; fill: #000; stroke: #000; stroke-width: .2px; }
.legend { font-size: 15px; }
.lettering .heavy { font-weight: 900; }
.plain { font-family: "DejaVu Sans Mono", monospace; font-size: 21px; }
.plain .axis { font-size: 19px; }
.hscroll { grid-column: 1 / 3; grid-row: 3; display: flex; background: #fafafa; border-top: 1px solid #dedede; padding: 2px 104px 0 38.5%; }
.hscroll i { flex: 1; height: 8px; border-radius: 4px; background: #b0b0b0; }

.sheets { height: 22px; flex: none; display: flex; align-items: stretch; background: #ebebeb; border-top: 1px solid #c9c9c9; padding-left: 5px; }
.nav { width: 19px; }
.sheet-tab { margin: 0 0 3px 6px; padding: 0 13px; background: #fff; border: 1px solid #c9c9c9; border-top: 0; border-radius: 0 0 3px 3px; color: #1b7a3c; font-size: 10px; font-weight: 700; }
.add { width: 32px; border-right: 1px solid #c9c9c9; margin-bottom: 3px; }
.status { height: 18px; flex: none; display: flex; align-items: center; font-size: 10px; color: #444; background: linear-gradient(#e2e2e2, #cdcdcd); border-top: 1px solid #ababab; padding: 0 17px 0 19px; }
.calc { margin: 0 16px; }
.access { gap: 2px; margin-left: 13px; }
.access svg { fill: none; stroke: #555; }
.views { margin-left: auto; display: flex; align-self: stretch; }
.view { width: 30px; }
.view.on { background: #979797; }
.zoom { display: flex; align-items: center; gap: 4px; margin-left: 4px; font-size: 15px; line-height: 16px; }
.zoom input { appearance: none; width: 83px; height: 3px; margin: 0; border-radius: 2px; background: #8c8c8c; }
.zoom input::-webkit-slider-thumb { appearance: none; width: 14px; height: 14px; border-radius: 50%; background: #fff; box-shadow: 0 0 1px #555; }
.status output { margin-left: 12px; }
```
